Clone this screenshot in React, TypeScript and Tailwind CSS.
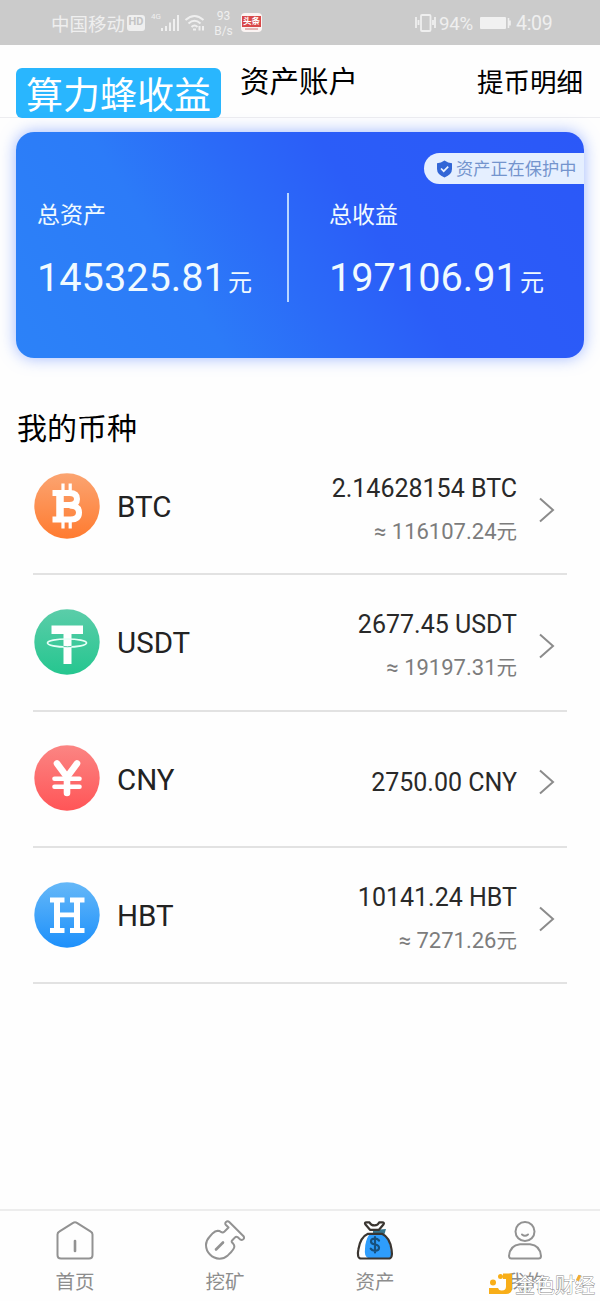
import type { ReactNode } from 'react';

function CoinDisc({ id, from, to, children }: { id: string; from: string; to: string; children: ReactNode }) {
  return (
    <svg className="mb-px ml-[0.5px] size-[66px] shrink-0" viewBox="0 0 66 66" fill="none">
      <defs>
        <linearGradient id={id} x1="0" y1="0" x2="0" y2="1">
          <stop offset="0" stopColor={from} />
          <stop offset="1" stopColor={to} />
        </linearGradient>
      </defs>
      <circle cx="33" cy="33" r="32.7" fill={`url(#${id})`} />
      {children}
    </svg>
  );
}

function BtcIcon() {
  return (
    <CoinDisc id="btc" from="#fba471" to="#ff7b30">
      <g stroke="#fff">
        <path d="M29 10.5v8M36.200 10.500v8M29 47v8.500M36.200 47v8.500" strokeWidth="3.200" />
        <path d="M18.500 20H35.500q7.500 0 7.500 6 0 6-7.500 6h-9M35.500 32.500q9.500 0 9.500 7 0 7-8.500 7H18.500" strokeWidth="6" />
        <path d="M26 19v29" strokeWidth="7.500" />
      </g>
    </CoinDisc>
  );
}

function UsdtIcon() {
  return (
    <CoinDisc id="usdt" from="#5bcda9" to="#25c68f">
      <path d="M17.500 16.500h31.500v8.500H37.500v30h-8V25H17.500z" fill="#fff" />
      <ellipse cx="33" cy="34" rx="19.500" ry="4" stroke="#e5fff6" strokeWidth="1.700" />
      <path d="M29.500 37.400q4 .6 8 0" stroke="#65c9aa" strokeWidth="1" />
    </CoinDisc>
  );
}

function CnyIcon() {
  return (
    <CoinDisc id="cny" from="#fb8583" to="#ff5557">
      <g stroke="#fff" strokeLinecap="round" strokeLinejoin="round">
        <path d="M23 18.500 33 32l10-13.500M33 32v16" strokeWidth="6.600" />
        <path d="M20.500 33.700h25M20.500 41.700h25" strokeWidth="4.600" />
      </g>
    </CoinDisc>
  );
}

function HbtIcon() {
  return (
    <CoinDisc id="hbt" from="#65b8f8" to="#1d90fb">
      <g stroke="#fff">
        <path d="M23 17v32M43 17v32" strokeWidth="6" />
        <path d="M16 18h14.500M36 18h14.500M16 48.500h14.500M36 48.500h14.500M23 32.800h20" strokeWidth="4.800" />
      </g>
    </CoinDisc>
  );
}

const coins = [
  { name: 'BTC', amount: '2.14628154 BTC', value: '116107.24', icon: <BtcIcon /> },
  { name: 'USDT', amount: '2677.45 USDT', value: '19197.31', icon: <UsdtIcon /> },
  { name: 'CNY', amount: '2750.00 CNY', value: '', icon: <CnyIcon /> },
  { name: 'HBT', amount: '10141.24 HBT', value: '7271.26', icon: <HbtIcon /> },
];

function StatusBar() {
  return (
    <div className="flex h-[45px] shrink-0 items-center bg-[#cbcbcb] pl-[51px] text-[#efefef]">
      <span className="mt-[5px] w-[76px] text-[18.500px] leading-none">中国移动</span>
      <span className="flex h-4 w-[18px] items-center justify-center rounded-[3px] bg-[#efefef] text-[11px] font-bold text-[#c4c4c4]">HD</span>
      <span className="mb-3 ml-1.5 w-[9px] text-[8px] leading-none">4G</span>
      <svg className="h-[18px] w-[20px]" viewBox="0 0 20 18" stroke="#efefef" strokeWidth="2">
        <path d="M2 14v3M6 12v5M10 8.500V17M14 5v12M18 1v16" />
      </svg>
      <svg className="ml-[4px] h-[18px] w-[22px]" viewBox="0 0 22 18" fill="none" stroke="#efefef" strokeWidth="2">
        <path d="M1.500 6q9-8 18 0M4.500 9.500q6-5.500 12 0M7.500 13q3-3 6 0" />
        <path d="M9 15.500h3M15.500 12v4.500M19 12v4.500" />
      </svg>
      <span className="ml-[7px] mt-[2px] w-[21px] text-center text-[12px] leading-[15px]">93<br />B/s</span>
      <span className="ml-[7px] flex h-[19px] w-[21px] flex-col overflow-hidden rounded-[4px] bg-[#fbf4f3]">
        <span className="mx-px mt-[3px] flex h-[11px] items-center justify-center bg-[#d84849] text-[8.500px] font-bold leading-none text-white">头条</span>
        <span className="mx-1 mt-px h-0.5 bg-[#e5b7b5]" />
      </span>
      <svg className="ml-[153px] h-[18px] w-[24px]" viewBox="0 0 24 18" fill="none" stroke="#efefef" strokeWidth="1.800">
        <rect x="6" y="1" width="9.500" height="16" rx="1" />
        <path d="M1 3v11M3.500 6v5M18 6v5M20 3v11" />
      </svg>
      <span className="mt-[3px] w-[41px] text-[18.700px] tracking-[-0.3px]">94%</span>
      <svg className="h-3 w-[32px]" viewBox="0 0 32 12">
        <rect width="26" height="12" rx="1" fill="#f1f1f1" />
        <path d="M28.500 1v10M30 3.500v5" stroke="#efefef" strokeWidth="1.600" />
      </svg>
      <span className="ml-[4px] mt-[3px] text-[19.500px] tracking-[-0.3px]">4:09</span>
    </div>
  );
}

function Balance({ label, amount }: { label: string; amount: string }) {
  return (
    <div className="text-[#f0faff]">
      <div className="pt-[2px] text-[23px] leading-[30px]">{label}</div>
      <div className="mt-[22px] flex items-baseline whitespace-nowrap leading-[50px]">
        <span className="text-[39.700px]">{amount}</span>
        <span className="ml-[2px] text-[24px]">元</span>
      </div>
    </div>
  );
}

function HomeIcon() {
  return (
    <svg className="size-10" viewBox="0 0 40 40" fill="none" stroke="#929292" strokeWidth="2" strokeLinecap="round" strokeLinejoin="round">
      <path d="M18.500 2.700q1.500-1 3 0l14.300 8.900q1.700 1 1.700 3V35q0 3.500-3.500 3.500H6q-3.500 0-3.500-3.500V14.600q0-2 1.700-3z" />
      <path d="M20 21v10" strokeWidth="2.600" />
    </svg>
  );
}

function ShovelIcon() {
  return (
    <svg className="size-10" viewBox="0 0 40 40" fill="none" stroke="#929292" strokeWidth="2" strokeLinecap="round" strokeLinejoin="round">
      <path d="M12.700 10.700q2 0 3.300 1.200 1.800 1.200 3.500-.4L23.500 7.500 21 5q-1.500-1.700 0-3 1.700-1.500 3.500.2L38.300 16q1.500 1.800.2 3-1.300 1.700-3.500.3l-2.500-2.200q-1.300-.8-2.500.3l-2.700 2.800q-1.300 1.400 0 2.600l1 1q1.600 1.800.7 4.200-.8 2-3 4.200l-3.200 3.200Q19 38.700 14.500 38.700 9 38.500 5 34.500 1 30.500 1 25q0-4.500 3.800-8.500l3-3.300q2.200-2.200 4.900-2.500z" />
      <path d="m11 29.500 7-7" strokeWidth="2.600" />
    </svg>
  );
}

function MoneyBagIcon() {
  return (
    <svg className="size-10" viewBox="0 0 40 40" fill="none" strokeLinecap="round" strokeLinejoin="round">
      <path d="M14.500 14H29l5.500 9 2 12q0 3-3 3H13q-4-2-3-9 0-8 4.500-15z" fill="#2e9dfc" />
      <path d="M18 10 31 9l-1.500 5H18z" fill="#35758e" />
      <path d="M15 9.800 10.500 4.500Q9 2.400 11.500 2.400h3q1.500 3 5 3t4.700-3h3q2.700 0 1.200 2.100L24 9.800zM13 13.800H27q8 3.700 9.600 16.200.6 4 0 6.200-.7 2.300-3 2.300H6.200q-2.300 0-3-2.300-.7-2.800.2-7Q5.500 17 13 13.800z" stroke="#3a3530" strokeWidth="2.200" />
      <path d="M24 20.500q-1.500-2-4-2-4 0-4 3 0 2.500 4 3t4 3.300q0 3-4 3-3 0-4.300-2.200M20 17v15.500" stroke="#17507d" strokeWidth="2.200" />
    </svg>
  );
}

function ProfileIcon() {
  return (
    <svg className="size-10" viewBox="0 0 40 40" fill="none" stroke="#929292" strokeWidth="2" strokeLinecap="round" strokeLinejoin="round">
      <circle cx="20" cy="11.500" r="9.500" />
      <path d="M17 14.500q3 2.500 6 0M15 24.300h10q10 1 11 11.700 0 2.500-2.500 2.500h-27Q4 38.500 4 36q1-10.700 11-11.700z" />
    </svg>
  );
}

const tabs = [
  { label: '首页', icon: <HomeIcon /> },
  { label: '挖矿', icon: <ShovelIcon /> },
  { label: '资产', icon: <MoneyBagIcon /> },
  { label: '我的', icon: <ProfileIcon /> },
];

export default function App() {
  return (
    <div className="relative flex h-[1301px] w-[600px] flex-col overflow-hidden bg-[#fefefe] font-[Roboto,'Noto_Sans_CJK_SC',sans-serif]">
      <StatusBar />
      <header className="flex h-[73px] shrink-0 items-start border-b border-[#ededf0] pl-[16px] pr-[17px]">
        <div className="mt-[23px] flex h-[50px] w-[205px] items-center justify-center rounded-[6px] bg-[#29b6fe] pt-[6px] text-[37px] leading-none text-white">算力蜂收益</div>
        <h1 className="ml-[19px] mt-[17px] text-[29.500px] leading-[40px] text-black">资产账户</h1>
        <span className="ml-auto mt-[18px] text-[26.500px] leading-[40px] text-black">提币明细</span>
      </header>

      <section className="relative mx-[16px] mt-[14px] flex h-[226px] shrink-0 rounded-[18px] bg-[linear-gradient(58deg,#2c82f8_0%,#2c7bf8_30%,#2b6bf8_46%,#2b5df8_62%,#2b58f8_100%)] pt-[67px] shadow-[0_0_16px_rgba(80,125,255,0.55)]">
        <div className="w-[271px] pl-[21px]"><Balance label="总资产" amount="145325.81" /></div>
        <div className="-mt-[6px] h-[109px] w-[2px] bg-[#b9d6ff]" />
        <div className="pl-[40px]"><Balance label="总收益" amount="197106.91" /></div>
        <div className="absolute right-0 top-[21px] flex h-[31px] w-[160px] items-center rounded-l-full bg-[#e5efff] pl-[12px] text-[17.200px] text-[#7494cd]">
          <svg className="mr-[3px] h-[18px] w-[17px] shrink-0" viewBox="0 0 17 18" fill="none">
            <path d="M8.500.5q3.500 2.500 7.500 2.700V9q0 5.500-7.500 8.500Q1 14.500 1 9V3.200Q5 3 8.500.500z" fill="#3266d6" />
            <path d="m5 8.500 2.700 2.700 4.500-4.500" stroke="#eaf3ff" strokeWidth="1.700" />
          </svg>
          <span className="mt-[2px] whitespace-nowrap">资产正在保护中</span>
        </div>
      </section>

      <h2 className="ml-[17px] mt-[51px] text-[30px] leading-[40px] text-black">我的币种</h2>
      <div className="mx-[33px] mt-[-10px] flex flex-col">
        {coins.map((coin) => (
          <div key={coin.name} className="flex h-[136.300px] items-center border-b-2 border-[#e2e2e2]">
            {coin.icon}
            <span className="ml-[17.500px] mt-[2px] text-[29.500px] text-[#222]">{coin.name}</span>
            <div className="ml-auto mt-[9px] text-right">
              <div className="text-[25px] leading-[36px] text-[#292929]">{coin.amount}</div>
              {coin.value && (
                <div className="mt-[7px] text-[22px] leading-[36px] text-[#7c7c7c]">≈ {coin.value}<span className="text-[20.500px]">元</span></div>
              )}
            </div>
            <svg className="ml-[21px] mr-[12px] mt-[7px] h-[26px] w-[17px]" viewBox="0 0 17 26" fill="none" stroke="#8b8b8b" strokeWidth="2">
              <path d="m2 1.500 13 11.500L2 24.500" />
            </svg>
          </div>
        ))}
      </div>

      <nav className="mt-auto grid h-[92px] shrink-0 grid-cols-4 border-t-2 border-[#ededed]">
        {tabs.map((tab) => (
          <div key={tab.label} className="flex flex-col items-center pt-[9px]">
            {tab.icon}
            <span className="mt-[9px] text-[19.500px] leading-[28px] text-[#8d8d8d]">{tab.label}</span>
          </div>
        ))}
      </nav>

      <div className="absolute bottom-[2px] right-[5px] flex items-center">
        <svg className="mb-[4px] h-[22px] w-[24px]" viewBox="0 0 24 22" fill="#f8ae18">
          <path d="M14 .5h9V15q0 6-6 6H0v-6h9q1 3 4 2.500 4 0 4-4V6h-3z" />
          <circle cx="11.500" cy="3.500" r="2.500" />
          <circle cx="4" cy="9.500" r="3" />
        </svg>
        <span className="ml-[2px] text-[20px] leading-[24px] text-white [-webkit-text-stroke:0.9px_#8c8c8c] [paint-order:stroke_fill]">金色财经</span>
        <span className="absolute right-[15px] top-[2px] h-[6px] w-[3px] rotate-[25deg] bg-[#f1ad32]" />
      </div>
    </div>
  );
}
